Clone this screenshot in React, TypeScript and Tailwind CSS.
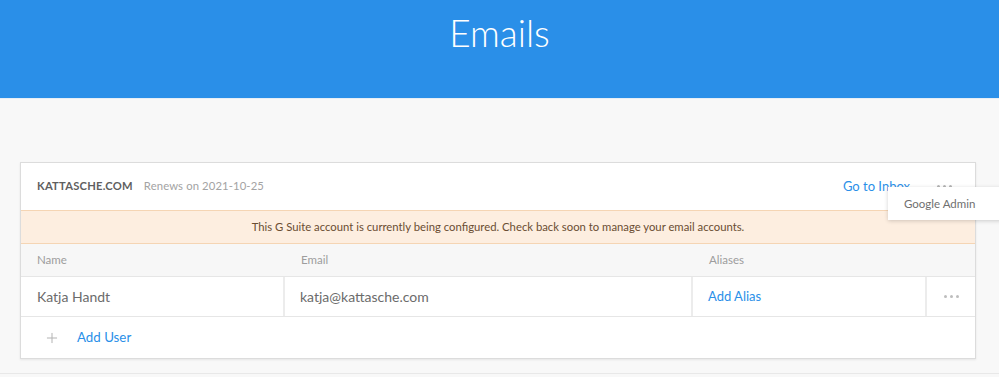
import { Plus } from "lucide-react";

const font = "font-['Lato','Liberation_Sans',sans-serif]";

export default function App() {
  return (
    <div className={`${font} w-[999px] h-[377px] overflow-hidden bg-[#f8f8f8]`}>
      <header className="h-[99px] bg-[#2a8fe8] border-b border-[#e6eef6] flex justify-center">
        <h1 className="mt-[11px] text-[37px] font-light leading-[44px] text-white">
          Emails
        </h1>
      </header>

      <div className="pt-[63px] h-[275px] border-b border-[#e8e8e8]">
        <section className="relative ml-[20px] w-[956px] bg-white border border-[#dcdcdc] shadow-[0_1px_2px_rgba(0,0,0,0.08)]">
          <div className="h-[47px] flex items-center pl-[16px]">
            <span className="text-[11.2px] font-bold tracking-[0.02em] text-[#5f5f5f]">KATTASCHE.COM</span>
            <span className="ml-[11px] text-[11.3px] tracking-[0.01em] text-[#a3a3a3]">Renews on 2021-10-25</span>
            <a className="ml-auto text-[13px] text-[#2a8fe8]">Go to Inbox</a>
            <span className="ml-[27px] mr-[23px] flex gap-[3px]">
              <i className="block w-[3px] h-[3px] rounded-full bg-[#b5b5b5]" />
              <i className="block w-[3px] h-[3px] rounded-full bg-[#b5b5b5]" />
              <i className="block w-[3px] h-[3px] rounded-full bg-[#b5b5b5]" />
            </span>
          </div>

          <div className="h-[34px] bg-[#fdeee0] border-y border-[#f5d5b4] flex items-center justify-center text-[11.3px] text-[#6a4d32]">
            This G Suite account is currently being configured. Check back soon to manage your email accounts.
          </div>

          <div className="h-[33px] bg-[#f7f7f7] flex items-center text-[11.5px] text-[#9d9d9d] border-b border-[#e6e6e6]">
            <span className="w-[264px] pl-[16px]">Name</span>
            <span className="w-[408px] pl-[16px]">Email</span>
            <span className="pl-[16px]">Aliases</span>
          </div>

          <div className="h-[40px] flex text-[14px] border-b border-[#e6e6e6]">
            <div className="w-[264px] pl-[16px] flex items-center text-[#6b6b6b] border-r-2 border-[#ececec]">
              Katja Handt
            </div>
            <div className="w-[408px] pl-[15px] flex items-center text-[#6b6b6b] border-r-2 border-[#ececec]">
              katja@kattasche.com
            </div>
            <div className="w-[234px] pl-[15px] flex items-center text-[13px] text-[#2a8fe8] border-r-2 border-[#ececec]">
              Add Alias
            </div>
            <div className="flex-1 flex items-center justify-center gap-[3px]">
              <i className="block w-[3px] h-[3px] rounded-full bg-[#bdbdbd]" />
              <i className="block w-[3px] h-[3px] rounded-full bg-[#bdbdbd]" />
              <i className="block w-[3px] h-[3px] rounded-full bg-[#bdbdbd]" />
            </div>
          </div>

          <div className="h-[41px] flex items-center pl-[23px]">
            <Plus size={16} strokeWidth={1.5} className="text-[#b3b3b3]" />
            <span className="ml-[17px] text-[13.3px] text-[#2a8fe8]">Add User</span>
          </div>

          <div className="absolute left-[867px] top-[24px] w-[130px] h-[33px] bg-white shadow-[0_1px_4px_rgba(0,0,0,0.18)] flex items-center pl-[16px] text-[11.5px] text-[#6f6f6f]">
            Google Admin
          </div>
        </section>
      </div>
    </div>
  );
}
